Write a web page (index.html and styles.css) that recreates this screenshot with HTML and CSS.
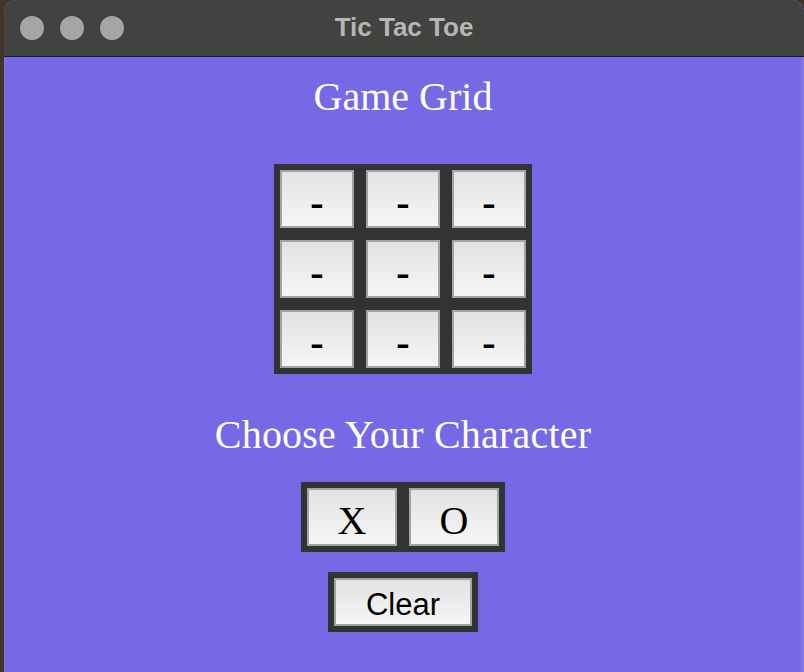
FILE: index.html
```html
<!DOCTYPE html>
<html>
<head>
<meta charset="utf-8">
<title>Tic Tac Toe</title>
<link rel="stylesheet" href="styles.css">
</head>
<body>
<div class="window">
  <div class="titlebar">
    <div class="lights">
      <span class="light"></span>
      <span class="light"></span>
      <span class="light"></span>
    </div>
    <div class="title">Tic Tac Toe</div>
  </div>
  <div class="content">
    <h1 class="heading heading-grid">Game Grid</h1>
    <div class="frame grid">
      <button class="btn cell">-</button>
      <button class="btn cell">-</button>
      <button class="btn cell">-</button>
      <button class="btn cell">-</button>
      <button class="btn cell">-</button>
      <button class="btn cell">-</button>
      <button class="btn cell">-</button>
      <button class="btn cell">-</button>
      <button class="btn cell">-</button>
    </div>
    <h2 class="heading heading-choose">Choose Your Character</h2>
    <div class="frame choices">
      <button class="btn choice">X</button>
      <button class="btn choice">O</button>
    </div>
    <div class="frame clear-frame">
      <button class="btn clear">Clear</button>
    </div>
  </div>
</div>
</body>
</html>
```

FILE: styles.css
```css
html, body {
  margin: 0;
  padding: 0;
}
body {
  width: 804px;
  height: 672px;
  overflow: hidden;
  background: #3f3629;
  padding-left: 4px;
  box-sizing: border-box;
}
.window {
  width: 800px;
  height: 672px;
  border-top-left-radius: 12px;
  border-top-right-radius: 12px;
  overflow: hidden;
  background: #7768e5;
  display: flex;
  flex-direction: column;
  box-shadow: inset 1px 0 0 #8577ea, inset -3px 0 0 #8173e8;
}
.titlebar {
  height: 56px;
  flex: none;
  background: #424240;
  border-bottom: 1px solid #1b1b1b;
  border-top: 1px solid #6a6a68;
  box-sizing: content-box;
  margin-top: -1px;
  position: relative;
  display: flex;
  align-items: center;
  justify-content: center;
}
.lights {
  position: absolute;
  left: 16px;
  top: 16px;
  display: flex;
  gap: 16px;
}
.light {
  width: 24px;
  height: 24px;
  border-radius: 50%;
  background: #a6a5a3;
}
.title {
  font-family: "Liberation Sans", Arial, sans-serif;
  font-weight: bold;
  font-size: 26px;
  color: #b6b6b4;
  margin-top: -1px;
}
.content {
  flex: 1;
  display: flex;
  flex-direction: column;
  align-items: center;
  padding-right: 2px;
}
.heading {
  margin: 0;
  font-family: "Liberation Serif", "Times New Roman", serif;
  font-weight: normal;
  font-size: 40px;
  line-height: 46px;
  color: #ffffff;
}
.heading-grid {
  margin-top: 17px;
}
.heading-choose {
  margin-top: 38px;
  letter-spacing: 0.2px;
}
.frame {
  background: #333333;
  padding: 6px;
}
.grid {
  margin-top: 44px;
  display: grid;
  grid-template-columns: repeat(3, 74px);
  grid-auto-rows: 58px;
  gap: 12px;
}
.btn {
  box-sizing: border-box;
  margin: 0;
  border: 2px solid #a4a4a4;
  background: linear-gradient(#e2e2e2, #f6f6f6);
  color: #000000;
  padding: 0;
  font-family: "Liberation Serif", "Times New Roman", serif;
  font-size: 40px;
  cursor: pointer;
}
.cell {
  width: 74px;
  height: 58px;
  line-height: 50px;
  padding-top: 6px;
  font-weight: bold;
}
.choices {
  margin-top: 24px;
  display: flex;
  gap: 12px;
}
.choice {
  width: 90px;
  height: 58px;
  line-height: 50px;
  padding-top: 6px;
}
.clear-frame {
  margin-top: 20px;
}
.clear {
  display: block;
  width: 138px;
  height: 48px;
  font-family: "Liberation Sans", Arial, sans-serif;
  font-size: 31px;
  line-height: 40px;
  padding-top: 5px;
}
```
